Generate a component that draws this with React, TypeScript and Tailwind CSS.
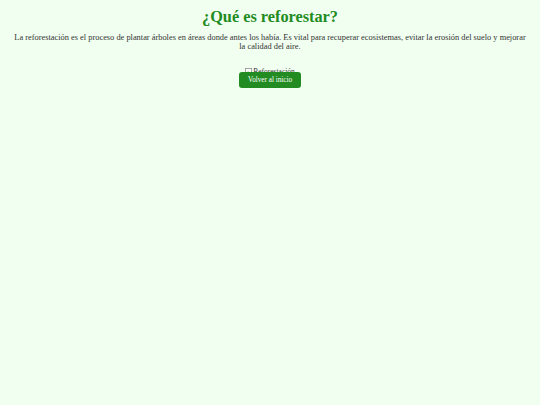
export default function App() {
  return (
    <div className="min-h-[405px] w-full bg-[#f0fff0] px-[12px] text-center" style={{ fontFamily: '"Liberation Serif", serif' }}>
      <h1 className="pt-[7px] text-[16.3px] font-bold leading-[20px] text-[#228b22]">¿Qué es reforestar?</h1>
      <p className="mt-[7px] text-[8.4px] leading-[8.5px] text-[#333]">
        La reforestación es el proceso de plantar árboles en áreas donde antes los había. Es vital para recuperar ecosistemas, evitar la erosión del suelo y mejorar la calidad del aire.
      </p>
      <div className="mt-[17px] flex flex-col items-center">
        <div className="flex h-[4px] items-start justify-center gap-[1px] overflow-visible text-[7.5px] leading-[8px] text-[#333]">
          <svg width="7" height="8" viewBox="0 0 8 9" className="shrink-0">
            <rect x="0.5" y="0.5" width="7" height="8" fill="#fff" stroke="#999" strokeWidth="1" />
            <path d="M1.5 7 L3.5 4 L5 6 L6.5 4.5" fill="none" stroke="#6a6" strokeWidth="0.8" />
          </svg>
          <span>Reforestación</span>
        </div>
        <button className="relative h-[16px] rounded-[3px] bg-[#228b22] px-[9px] text-[7.2px] leading-[16px] text-white">Volver al inicio</button>
      </div>
    </div>
  );
}
